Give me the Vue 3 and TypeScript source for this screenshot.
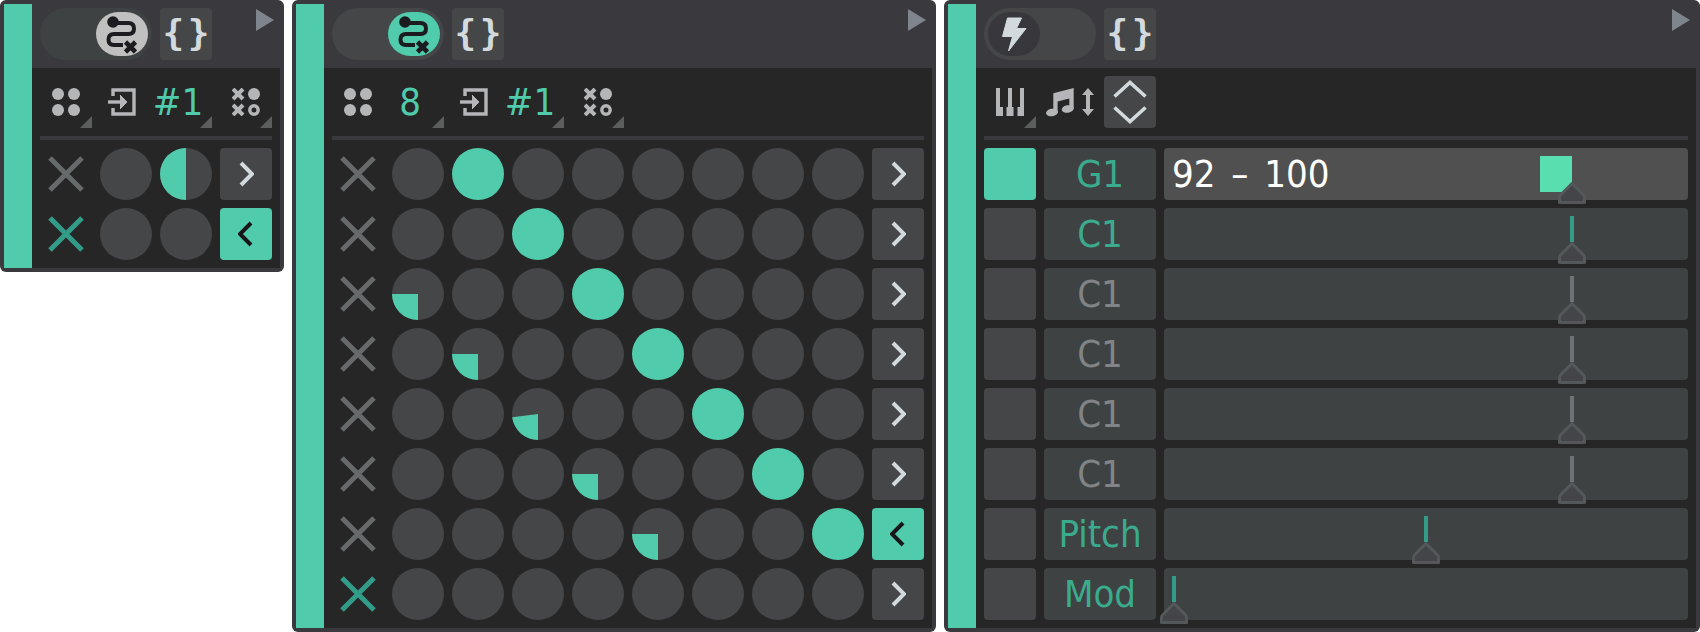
<script setup lang="ts">
type Wedge = { col: number; sweep: number };
type GridRow = { full: number; wedge?: Wedge; active: boolean; armed: boolean };

const mono = "#b4b6b8";

function pie(sweep: number): string {
  // starts at 6 o'clock and goes clockwise
  const r = 26;
  const a = ((180 + sweep) * Math.PI) / 180;
  const x = 26 + r * Math.sin(a);
  const y = 26 - r * Math.cos(a);
  return `M26 26V52A${r} ${r} 0 ${sweep > 180 ? 1 : 0} 1 ${x.toFixed(2)} ${y.toFixed(2)}Z`;
}

const smallRows: GridRow[] = [
  { full: -1, wedge: { col: 1, sweep: 180 }, active: false, armed: false },
  { full: -1, active: true, armed: true },
];

const bigRows: GridRow[] = [
  { full: 1, active: false, armed: false },
  { full: 2, active: false, armed: false },
  { full: 3, wedge: { col: 0, sweep: 90 }, active: false, armed: false },
  { full: 4, wedge: { col: 1, sweep: 90 }, active: false, armed: false },
  { full: 5, wedge: { col: 2, sweep: 83 }, active: false, armed: false },
  { full: 6, wedge: { col: 3, sweep: 90 }, active: false, armed: false },
  { full: 7, wedge: { col: 4, sweep: 90 }, active: true, armed: false },
  { full: -1, active: false, armed: true },
];

const slots = [
  { note: "G1", on: true, value: "92 – 100", pos: 408, green: true },
  { note: "C1", on: false, value: "", pos: 408, green: true },
  { note: "C1", on: false, value: "", pos: 408, green: false },
  { note: "C1", on: false, value: "", pos: 408, green: false },
  { note: "C1", on: false, value: "", pos: 408, green: false },
  { note: "C1", on: false, value: "", pos: 408, green: false },
  { note: "Pitch", on: false, value: "", pos: 262, green: true },
  { note: "Mod", on: false, value: "", pos: 10, green: true },
];
</script>

<template>
  <div class="page">
    <!-- small matrix -->
    <section class="panel small">
      <div class="strip"></div>
      <div class="main">
        <header class="head">
          <div class="pill route-pill">
            <span class="knob grey">
              <svg width="52" height="44" viewBox="0 0 52 44"><path d="M17 11H32.5Q38 11 38 16.5T32.5 22H18Q12.5 22 12.5 27.5T18 33H27" fill="none" stroke="#1c1c20" stroke-width="4"/><circle cx="17" cy="10" r="5.8" fill="#1c1c20"/><path d="M29.5 30L39.5 40M39.5 30L29.5 40" stroke="#1c1c20" stroke-width="4.6"/></svg>
            </span>
          </div>
          <div class="btn braces">{ }</div>
          <svg class="play" width="18" height="22" viewBox="0 0 18 22"><path d="M0 0L18 11L0 22Z" fill="#7f858c"/></svg>
        </header>
        <div class="body">
          <div class="tools">
            <div class="tool corner">
              <svg width="28" height="28" viewBox="0 0 28 28" :fill="mono"><circle cx="6" cy="6" r="6"/><circle cx="22" cy="6" r="6"/><circle cx="6" cy="22" r="6"/><circle cx="22" cy="22" r="6"/></svg>
            </div>
            <div class="tool shift">
              <svg width="28" height="28" viewBox="0 0 28 28" fill="none" :stroke="mono" stroke-width="3.4"><path d="M5 8V2H26V26H5V20"/><path d="M0 14H18"/><path d="M12 7L19 14L12 21" :fill="mono" stroke-width="1"/></svg>
            </div>
            <div class="tool corner num">#1</div>
            <div class="tool corner">
              <svg width="28" height="28" viewBox="0 0 28 28" :stroke="mono" fill="none"><path d="M1 1L11 11M11 1L1 11M1 17L11 27M11 17L1 27" stroke-width="4"/><circle cx="22" cy="6" r="6" :fill="mono" stroke="none"/><circle cx="22" cy="22" r="4.2" stroke-width="3.4"/></svg>
            </div>
          </div>
          <div class="rule"></div>
          <div class="rows">
            <div v-for="(row, i) in smallRows" :key="i" class="row">
              <div class="cell">
                <svg width="36" height="36" viewBox="0 0 36 36"><path d="M2 2L34 34M34 2L2 34" :stroke="row.armed ? '#339c88' : '#666a6a'" stroke-width="5"/></svg>
              </div>
              <div v-for="c in 2" :key="c" class="dot">
                <svg v-if="row.wedge && row.wedge.col === c - 1" width="52" height="52" viewBox="0 0 52 52"><path :d="pie(row.wedge.sweep)" fill="#50cbab"/></svg>
              </div>
              <div class="btn arrow" :class="{ lit: row.active }">
                <svg width="16" height="26" viewBox="0 0 16 26" fill="none" stroke-width="4"><path v-if="row.active" d="M13 2L2 13L13 24" stroke="#16161a"/><path v-else d="M3 2L14 13L3 24" stroke="#d3dadd"/></svg>
              </div>
            </div>
          </div>
        </div>
      </div>
    </section>

    <!-- sequencer matrix -->
    <section class="panel big">
      <div class="strip"></div>
      <div class="main">
        <header class="head">
          <div class="pill route-pill lit-pill">
            <span class="knob green">
              <svg width="52" height="44" viewBox="0 0 52 44"><path d="M17 11H32.5Q38 11 38 16.5T32.5 22H18Q12.5 22 12.5 27.5T18 33H27" fill="none" stroke="#1c1c20" stroke-width="4"/><circle cx="17" cy="10" r="5.8" fill="#1c1c20"/><path d="M29.5 30L39.5 40M39.5 30L29.5 40" stroke="#1c1c20" stroke-width="4.6"/></svg>
            </span>
          </div>
          <div class="btn braces">{ }</div>
          <svg class="play" width="18" height="22" viewBox="0 0 18 22"><path d="M0 0L18 11L0 22Z" fill="#7f858c"/></svg>
        </header>
        <div class="body">
          <div class="tools">
            <div class="tool">
              <svg width="28" height="28" viewBox="0 0 28 28" :fill="mono"><circle cx="6" cy="6" r="6"/><circle cx="22" cy="6" r="6"/><circle cx="6" cy="22" r="6"/><circle cx="22" cy="22" r="6"/></svg>
            </div>
            <div class="tool corner num">8</div>
            <div class="tool shift">
              <svg width="28" height="28" viewBox="0 0 28 28" fill="none" :stroke="mono" stroke-width="3.4"><path d="M5 8V2H26V26H5V20"/><path d="M0 14H18"/><path d="M12 7L19 14L12 21" :fill="mono" stroke-width="1"/></svg>
            </div>
            <div class="tool corner num">#1</div>
            <div class="tool corner">
              <svg width="28" height="28" viewBox="0 0 28 28" :stroke="mono" fill="none"><path d="M1 1L11 11M11 1L1 11M1 17L11 27M11 17L1 27" stroke-width="4"/><circle cx="22" cy="6" r="6" :fill="mono" stroke="none"/><circle cx="22" cy="22" r="4.2" stroke-width="3.4"/></svg>
            </div>
          </div>
          <div class="rule"></div>
          <div class="rows">
            <div v-for="(row, i) in bigRows" :key="i" class="row">
              <div class="cell">
                <svg width="36" height="36" viewBox="0 0 36 36"><path d="M2 2L34 34M34 2L2 34" :stroke="row.armed ? '#339c88' : '#666a6a'" stroke-width="5"/></svg>
              </div>
              <div v-for="c in 8" :key="c" class="dot" :class="{ full: row.full === c - 1 }">
                <svg v-if="row.wedge && row.wedge.col === c - 1" width="52" height="52" viewBox="0 0 52 52"><path :d="pie(row.wedge.sweep)" fill="#50cbab"/></svg>
              </div>
              <div class="btn arrow" :class="{ lit: row.active }">
                <svg width="16" height="26" viewBox="0 0 16 26" fill="none" stroke-width="4"><path v-if="row.active" d="M13 2L2 13L13 24" stroke="#16161a"/><path v-else d="M3 2L14 13L3 24" stroke="#d3dadd"/></svg>
              </div>
            </div>
          </div>
        </div>
      </div>
    </section>

    <!-- note slots -->
    <section class="panel notes">
      <div class="strip"></div>
      <div class="main">
        <header class="head">
          <div class="pill bolt-pill">
            <span class="knob dark">
              <svg width="52" height="44" viewBox="0 0 52 44"><path d="M19.5 6H33.5L28.5 16.5H38L20.5 39L24.5 24.5H14.5Z" fill="#d3dadd" stroke="#d3dadd" stroke-width="1" stroke-linejoin="round"/></svg>
            </span>
          </div>
          <div class="btn braces">{ }</div>
          <svg class="play" width="18" height="22" viewBox="0 0 18 22"><path d="M0 0L18 11L0 22Z" fill="#7f858c"/></svg>
        </header>
        <div class="body">
          <div class="tools">
            <div class="tool corner">
              <svg width="28" height="28" viewBox="0 0 28 28" :fill="mono"><path d="M0 0H4V19H7V28H0ZM12 0H16V19H17.5V28H10.5V19H12ZM24 0H28V28H21.5V19H24Z"/></svg>
            </div>
            <div class="tool pair">
              <svg width="28" height="29" viewBox="0 0 28 29" :fill="mono"><path d="M7.3 5.3L27.7 0V21H23.3V10.5L11.6 13.4V24.5H7.3Z"/><ellipse cx="6" cy="24.5" rx="6" ry="3.8" transform="rotate(-8 6 24.5)"/><ellipse cx="21.7" cy="21" rx="6" ry="3.8" transform="rotate(-8 21.7 21)"/></svg>
              <svg width="12" height="28" viewBox="0 0 12 28" :fill="mono"><path d="M6 0L12 7H8V21H12L6 28L0 21H4V7H0Z"/></svg>
            </div>
            <div class="btn updown">
              <svg width="34" height="44" viewBox="0 0 34 44" fill="none" stroke="#d3dadd" stroke-width="3.6"><path d="M1.5 16.5L17 2.5L32.5 16.5M1.5 27.5L17 41.5L32.5 27.5"/></svg>
            </div>
          </div>
          <div class="rule"></div>
          <div class="rows">
            <div v-for="(slot, i) in slots" :key="i" class="row">
              <div class="btn toggle" :class="{ lit: slot.on }"></div>
              <div class="btn note" :class="{ tinted: slot.green }">{{ slot.note }}</div>
              <div class="track" :class="{ hot: slot.on }">
                <span v-if="slot.value" class="readout">{{ slot.value }}</span>
                <span v-if="slot.on" class="block" :style="{ left: slot.pos - 32 + 'px' }"></span>
                <span v-else class="stem" :class="{ tinted: slot.green }" :style="{ left: slot.pos - 2 + 'px' }"></span>
                <svg class="handle" width="28" height="22" viewBox="0 0 28 22" :style="{ left: slot.pos - 14 + 'px' }"><path d="M14 1.5L25.5 13Q26.5 14 26.5 16V20.5H1.5V16Q1.5 14 2.5 13Z" fill="#444548" stroke="#55585a" stroke-width="3" stroke-linejoin="round"/></svg>
              </div>
            </div>
          </div>
        </div>
      </div>
    </section>
  </div>
</template>

<style>
html,
body {
  background: #fff;
}
</style>

<style scoped>
.page {
  display: flex;
  gap: 8px;
  align-items: flex-start;
  width: 1700px;
  font-family: "DejaVu Sans", sans-serif;
  font-stretch: condensed;
}

.panel {
  display: flex;
  padding: 4px;
  background: #3a3a3e;
  border-radius: 6px;
  box-sizing: border-box;
}

.small {
  width: 284px;
  height: 272px;
}

.big {
  width: 644px;
  height: 632px;
}

.notes {
  width: 756px;
  height: 632px;
}

.strip {
  flex: none;
  width: 28px;
  background: #50cbab;
}

.main {
  flex: 1;
  display: flex;
  flex-direction: column;
  min-width: 0;
}

.head {
  flex: none;
  position: relative;
  display: flex;
  gap: 8px;
  height: 64px;
  padding: 4px 8px 0;
  box-sizing: border-box;
}

.play {
  position: absolute;
  top: 5px;
  right: 6px;
}

.pill {
  display: flex;
  align-items: center;
  width: 112px;
  height: 52px;
  padding: 4px;
  box-sizing: border-box;
  border-radius: 26px;
  background: #3f4242;
}

.route-pill {
  justify-content: flex-end;
}

.lit-pill,
.bolt-pill {
  background: #454648;
}

.knob {
  display: flex;
  align-items: center;
  justify-content: center;
  width: 52px;
  height: 44px;
  border-radius: 22px;
}

.grey {
  background: #c0c0c0;
}

.green {
  background: #50cbab;
}

.dark {
  background: #38383c;
}

.btn {
  display: flex;
  align-items: center;
  justify-content: center;
  flex: none;
  width: 52px;
  height: 52px;
  border-radius: 4px;
  background: #454648;
  box-sizing: border-box;
}

.braces {
  color: #d3dadd;
  font-family: "DejaVu Sans Mono", monospace;
  font-size: 36px;
  font-weight: 700;
  font-stretch: normal;
  letter-spacing: -9px;
  white-space: nowrap;
  padding: 0 0 4px 0;
  text-indent: -9px;
}

.body {
  flex: 1;
  display: flex;
  flex-direction: column;
  gap: 8px;
  padding: 8px;
  background: #262626;
}

.tools {
  display: flex;
  gap: 8px;
  height: 52px;
}

.tool {
  position: relative;
  display: flex;
  align-items: center;
  justify-content: center;
  flex: none;
  width: 52px;
  height: 52px;
  box-sizing: border-box;
}

.shift {
  padding-right: 8px;
}

.corner::after {
  content: "";
  position: absolute;
  right: 0;
  bottom: 0;
  border-style: solid;
  border-width: 0 0 12px 12px;
  border-color: transparent transparent #5c5e5e transparent;
}

.num {
  padding-right: 16px;
  color: #50cbab;
  font-size: 38px;
  white-space: nowrap;
}

.pair {
  gap: 8px;
}

.updown {
  background: #454648;
}

.rule {
  flex: none;
  height: 4px;
  background: #3a3a3e;
}

.rows {
  display: flex;
  flex-direction: column;
  gap: 8px;
}

.row {
  display: flex;
  gap: 8px;
  height: 52px;
}

.cell {
  display: flex;
  align-items: center;
  justify-content: center;
  flex: none;
  width: 52px;
  height: 52px;
}

.dot {
  flex: none;
  width: 52px;
  height: 52px;
  border-radius: 50%;
  background: #454648;
}

.dot svg {
  display: block;
}

.dot.full {
  background: #50cbab;
}

.btn.lit {
  background: #50cbab;
}

.note {
  width: 112px;
  background: #3f4242;
  color: #808486;
  font-size: 38px;
}

.note.tinted {
  color: #3bab8d;
}

.toggle {
  background: #454648;
}

.track {
  position: relative;
  flex: 1;
  border-radius: 4px;
  background: #3f4242;
}

.track.hot {
  background: #505050;
}

.readout {
  position: absolute;
  left: 8px;
  top: 0;
  line-height: 52px;
  color: #fff;
  font-size: 38px;
  word-spacing: 5px;
  white-space: nowrap;
}

.block {
  position: absolute;
  top: 8px;
  width: 32px;
  height: 36px;
  background: #59deb0;
}

.stem {
  position: absolute;
  top: 8px;
  width: 4px;
  height: 26px;
  background: #6d7276;
}

.stem.tinted {
  background: #339c88;
}

.handle {
  position: absolute;
  top: 34px;
}
</style>
